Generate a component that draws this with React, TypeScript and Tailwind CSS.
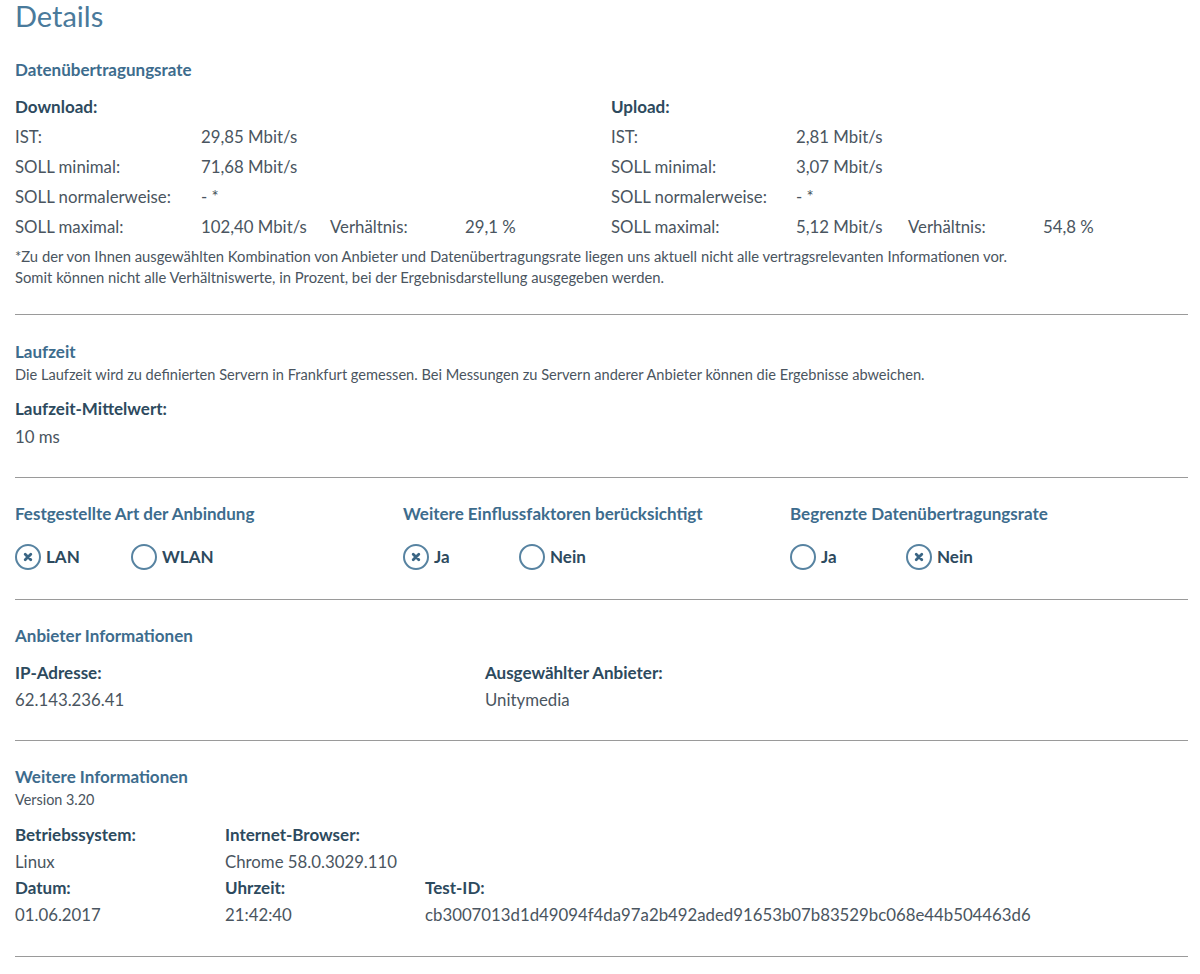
import React from "react";

const Radio = ({ checked, label }: { checked: boolean; label: string }) => (
  <div className="flex items-center gap-[5px] h-[26px]">
    <div className="w-[26px] h-[26px] rounded-full border-[2.5px] border-[#5783a1] flex items-center justify-center">
      {checked && (
        <svg width="10" height="10" viewBox="0 0 10 10">
          <path d="M2.2 2.2 L7.8 7.8 M7.8 2.2 L2.2 7.8" stroke="#3a6584" strokeWidth="2.8" strokeLinecap="round" />
        </svg>
      )}
    </div>
    <span className="text-[17px] font-bold text-[#2d4a5e]">{label}</span>
  </div>
);

const Hr = ({ mt }: { mt: string }) => <div className={`${mt} h-px bg-[#9a9a9a]`} />;

const Label = ({ children, className = "" }: { children: React.ReactNode; className?: string }) => (
  <div className={`text-[17px] font-bold text-[#2d4a5e] leading-[24px] ${className}`}>{children}</div>
);

const Head = ({ children, className = "" }: { children: React.ReactNode; className?: string }) => (
  <div className={`text-[17px] font-bold text-[#3d6c8d] leading-[24px] ${className}`}>{children}</div>
);

export default function App() {
  return (
    <div
      className="w-[1200px] bg-white pl-[15px] pr-[12px] text-[16.8px] text-[#4a5560]"
      style={{ fontFamily: "Lato, 'Liberation Sans', sans-serif" }}
    >
      <h1 className="text-[29px] leading-[32px] text-[#4a7a9b]">Details</h1>
      <Head className="mt-[26px]">Datenübertragungsrate</Head>
      <div className="mt-[13px] grid grid-cols-[596px_1fr]">
        <div>
          <Label>Download:</Label>
          <div className="mt-[3px] leading-[30px]">
            <div className="flex"><span className="w-[186px]">IST:</span><span>29,85 Mbit/s</span></div>
            <div className="flex"><span className="w-[186px]">SOLL minimal:</span><span>71,68 Mbit/s</span></div>
            <div className="flex"><span className="w-[186px]">SOLL normalerweise:</span><span>- *</span></div>
            <div className="flex">
              <span className="w-[186px]">SOLL maximal:</span>
              <span className="w-[129px]">102,40 Mbit/s</span>
              <span className="w-[135px]">Verhältnis:</span>
              <span>29,1 %</span>
            </div>
          </div>
        </div>
        <div>
          <Label>Upload:</Label>
          <div className="mt-[3px] leading-[30px]">
            <div className="flex"><span className="w-[185px]">IST:</span><span>2,81 Mbit/s</span></div>
            <div className="flex"><span className="w-[185px]">SOLL minimal:</span><span>3,07 Mbit/s</span></div>
            <div className="flex"><span className="w-[185px]">SOLL normalerweise:</span><span>- *</span></div>
            <div className="flex">
              <span className="w-[185px]">SOLL maximal:</span>
              <span className="w-[112px]">5,12 Mbit/s</span>
              <span className="w-[135px]">Verhältnis:</span>
              <span>54,8 %</span>
            </div>
          </div>
        </div>
      </div>
      <div className="mt-[4px] text-[14.8px] leading-[21px]">
        <div>*Zu der von Ihnen ausgewählten Kombination von Anbieter und Datenübertragungsrate liegen uns aktuell nicht alle vertragsrelevanten Informationen vor.</div>
        <div>Somit können nicht alle Verhältniswerte, in Prozent, bei der Ergebnisdarstellung ausgegeben werden.</div>
      </div>
      <Hr mt="mt-[26px]" />

      <Head className="mt-[25px]">Laufzeit</Head>
      <div className="mt-[1px] text-[14.6px] leading-[20px]">Die Laufzeit wird zu definierten Servern in Frankfurt gemessen. Bei Messungen zu Servern anderer Anbieter können die Ergebnisse abweichen.</div>
      <Label className="mt-[12px]">Laufzeit-Mittelwert:</Label>
      <div className="mt-[4px] leading-[24px]">10 ms</div>
      <Hr mt="mt-[28px]" />

      <div className="mt-[24px] grid grid-cols-[388px_387px_1fr]">
        {[
          { t: "Festgestellte Art der Anbindung", o: [["LAN", true], ["WLAN", false]] },
          { t: "Weitere Einflussfaktoren berücksichtigt", o: [["Ja", true], ["Nein", false]] },
          { t: "Begrenzte Datenübertragungsrate", o: [["Ja", false], ["Nein", true]] },
        ].map((g, i) => (
          <div key={i}>
            <Head>{g.t}</Head>
            <div className="mt-[18px] flex">
              {g.o.map(([l, c], j) => (
                <div key={j} className="w-[116px]">
                  <Radio label={l as string} checked={c as boolean} />
                </div>
              ))}
            </div>
          </div>
        ))}
      </div>
      <Hr mt="mt-[29px]" />

      <Head className="mt-[24px]">Anbieter Informationen</Head>
      <div className="mt-[13px] flex">
        <div className="w-[470px]">
          <Label>IP-Adresse:</Label>
          <div className="mt-[3px] leading-[24px]">62.143.236.41</div>
        </div>
        <div>
          <Label>Ausgewählter Anbieter:</Label>
          <div className="mt-[3px] leading-[24px]">Unitymedia</div>
        </div>
      </div>
      <Hr mt="mt-[28px]" />

      <Head className="mt-[24px]">Weitere Informationen</Head>
      <div className="mt-[1px] text-[14.4px] leading-[20px]">Version 3.20</div>
      <div className="mt-[13px] grid grid-cols-[210px_200px_1fr] leading-[24px]">
        <Label>Betriebssystem:</Label>
        <Label>Internet-Browser:</Label>
        <div />
        <div className="mt-[3px]">Linux</div>
        <div className="mt-[3px]">Chrome 58.0.3029.110</div>
        <div />
        <Label className="mt-[2px]">Datum:</Label>
        <Label className="mt-[2px]">Uhrzeit:</Label>
        <Label className="mt-[2px]">Test-ID:</Label>
        <div className="mt-[3px]">01.06.2017</div>
        <div className="mt-[3px]">21:42:40</div>
        <div className="mt-[3px]">cb3007013d1d49094f4da97a2b492aded91653b07b83529bc068e44b504463d6</div>
      </div>
      <Hr mt="mt-[29px]" />
      <div className="h-[17px]" />
    </div>
  );
}
